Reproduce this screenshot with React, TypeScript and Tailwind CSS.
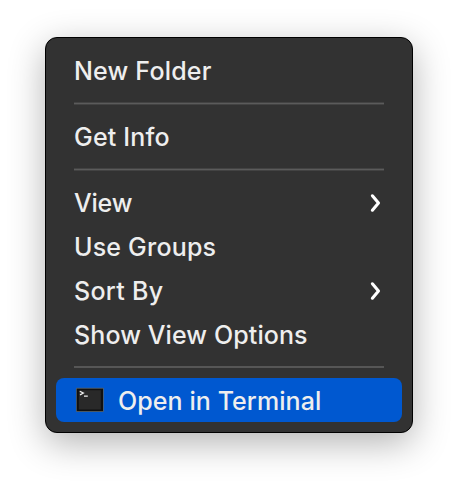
function Divider({ soft }: { soft?: boolean }) {
  return soft ? (
    <div className="px-[18px] pb-[9px] pt-[10px]">
      <div className="h-[3px] border-y border-[#434343] bg-[#5b5b5b]" />
    </div>
  ) : (
    <div className="px-[18px] py-[10px]">
      <div className="h-[2px] bg-[#565656]" />
    </div>
  );
}

function Chevron() {
  return (
    <svg className="ml-auto mr-[2px] mt-[2px]" width="12" height="20" viewBox="0 0 12 20" fill="none" stroke="#ffffff" strokeWidth="3.1" strokeLinecap="round" strokeLinejoin="round">
      <path d="M2.4 2.8 8.5 10 2.4 17.2" />
    </svg>
  );
}

function TerminalIcon() {
  return (
    <svg width="28" height="26" viewBox="0 0 28 26">
      <rect x="0" y="0.8" width="27.8" height="24.2" rx="1" fill="#52616e" />
      <rect x="0.8" y="1.7" width="26.2" height="22.4" fill="#101010" />
      <rect x="2.8" y="3.2" width="22" height="19.3" fill="#292929" />
      <path d="M3.8 4.3 7.4 6.1 4 7.9M8 9.2H11.8" fill="none" stroke="#eeeeee" strokeWidth="1.2" />
    </svg>
  );
}

function Item({ text, tracking = "", arrow }: { text: string; tracking?: string; arrow?: boolean }) {
  return (
    <div className="flex h-11 items-center px-[18px]">
      <span className={`whitespace-nowrap pt-[2px] ${tracking}`}>{text}</span>
      {arrow && <Chevron />}
    </div>
  );
}

export default function App() {
  return (
    <main className="h-[486px] w-[458px] overflow-hidden bg-white pl-[45px] pt-[37px] font-['Inter',sans-serif] text-[25px] font-[450] leading-[30px] tracking-[0.2px] text-[#eeeeee]">
      <div className="h-[396px] w-[368px] rounded-[12px] border border-black bg-[#323232] px-[10px] pt-[10px] shadow-[0_10px_36px_rgba(0,0,0,0.3)]">
        <Item text="New Folder" />
        <Divider soft />
        <Item text="Get Info" />
        <Divider soft />
        <Item text="View" tracking="tracking-[-0.2px]" arrow />
        <Item text="Use Groups" />
        <Item text="Sort By" tracking="tracking-[0.3px]" arrow />
        <Item text="Show View Options" tracking="tracking-[0.1px]" />
        <Divider />
        <div className="flex h-11 items-center gap-[14px] rounded-[8px] bg-[#0058d0] pl-5">
          <TerminalIcon />
          <span className="whitespace-nowrap pt-[2px] tracking-[0.08px]">Open in Terminal</span>
        </div>
      </div>
    </main>
  );
}
